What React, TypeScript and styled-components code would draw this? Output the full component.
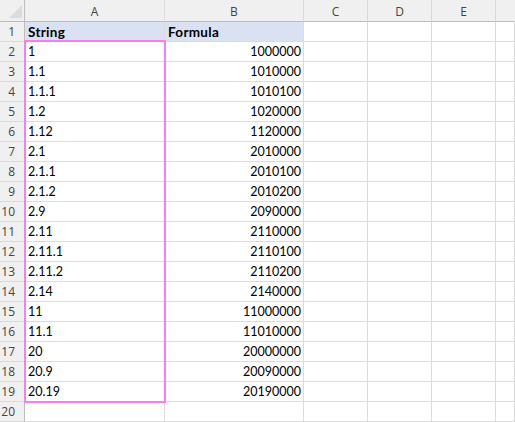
import React from "react";
import styled, { createGlobalStyle } from "styled-components";

const Global = createGlobalStyle`
  html, body { margin: 0; padding: 0; background: #ffffff; }
  body { width: 515px; height: 422px; overflow: hidden; }
`;

const Sheet = styled.div`
  position: relative;
  display: grid;
  grid-template-columns: 25px 140px 139px 64px 64px 64px 1fr;
  grid-template-rows: 22px repeat(20, 20px);
  width: 515px;
  font-family: "Lato", "Liberation Sans", sans-serif;
  font-size: 12.5px;
  color: #000;
`;

const Corner = styled.div`
  position: relative;
  background: #f0f0f0;
  border-right: 1px solid #bdbdbd;
  border-bottom: 1px solid #bdbdbd;
`;

const CornerTriangle = styled.svg`
  position: absolute;
  left: 9px;
  top: 5px;
`;

const ColHead = styled.div<{ $last?: boolean }>`
  background: #f0f0f0;
  border-right: 1px solid ${(p) => (p.$last ? "transparent" : "#dadada")};
  border-bottom: 1px solid #bdbdbd;
  display: flex;
  align-items: center;
  justify-content: center;
  font-family: "Open Sans", "Noto Sans", sans-serif;
  font-size: 12px;
  color: #444;
  padding-top: 1px;
  box-sizing: border-box;
`;

const RowHead = styled.div`
  background: #f0f0f0;
  border-right: 1px solid #bdbdbd;
  border-bottom: 1px solid #dadada;
  display: flex;
  align-items: flex-end;
  justify-content: flex-end;
  padding: 0 9px 1px 0;
  font-family: "Open Sans", "Noto Sans", sans-serif;
  font-size: 12px;
  color: #444;
  box-sizing: border-box;
`;

const Cell = styled.div<{ $right?: boolean; $head?: boolean }>`
  background: ${(p) => (p.$head ? "#d9e1f2" : "#ffffff")};
  border-right: 1px solid #dcdcdc;
  border-bottom: 1px solid #dcdcdc;
  display: flex;
  align-items: flex-end;
  justify-content: ${(p) => (p.$right ? "flex-end" : "flex-start")};
  padding: 0 2px 2px 3px;
  font-weight: ${(p) => (p.$head ? 700 : 400)};
  font-size: ${(p) => (p.$head ? "13.5px" : "12.5px")};
  letter-spacing: ${(p) => (p.$head ? "0.3px" : "0")};
  line-height: 14px;
  box-sizing: border-box;
  white-space: nowrap;
  overflow: hidden;
`;

const Selection = styled.div`
  position: absolute;
  left: 24px;
  top: 40px;
  width: 142px;
  height: 363px;
  border: 2px solid #f47ef2;
  box-sizing: border-box;
  pointer-events: none;
`;

const data: [string, string][] = [
  ["1", "1000000"],
  ["1.1", "1010000"],
  ["1.1.1", "1010100"],
  ["1.2", "1020000"],
  ["1.12", "1120000"],
  ["2.1", "2010000"],
  ["2.1.1", "2010100"],
  ["2.1.2", "2010200"],
  ["2.9", "2090000"],
  ["2.11", "2110000"],
  ["2.11.1", "2110100"],
  ["2.11.2", "2110200"],
  ["2.14", "2140000"],
  ["11", "11000000"],
  ["11.1", "11010000"],
  ["20", "20000000"],
  ["20.9", "20090000"],
  ["20.19", "20190000"],
];

const letters = ["A", "B", "C", "D", "E", ""];

export default function App() {
  const rows: React.ReactNode[] = [];
  for (let r = 1; r <= 20; r++) {
    let a = "";
    let b = "";
    let head = false;
    if (r === 1) {
      a = "String";
      b = "Formula";
      head = true;
    } else if (r - 2 < data.length) {
      [a, b] = data[r - 2];
    }
    rows.push(
      <React.Fragment key={r}>
        <RowHead>{r}</RowHead>
        <Cell $head={head}>{a}</Cell>
        <Cell $head={head} $right={!head}>
          {b}
        </Cell>
        <Cell />
        <Cell />
        <Cell />
        <Cell />
      </React.Fragment>
    );
  }
  return (
    <>
      <Global />
      <Sheet>
        <Corner>
          <CornerTriangle width="14" height="14" viewBox="0 0 14 14">
            <polygon points="13,0 13,13 0,13" fill="#dcdcdc" />
          </CornerTriangle>
        </Corner>
        {letters.map((l, i) => (
          <ColHead key={i} $last={i === letters.length - 1}>
            {l}
          </ColHead>
        ))}
        {rows}
        <Selection />
      </Sheet>
    </>
  );
}
